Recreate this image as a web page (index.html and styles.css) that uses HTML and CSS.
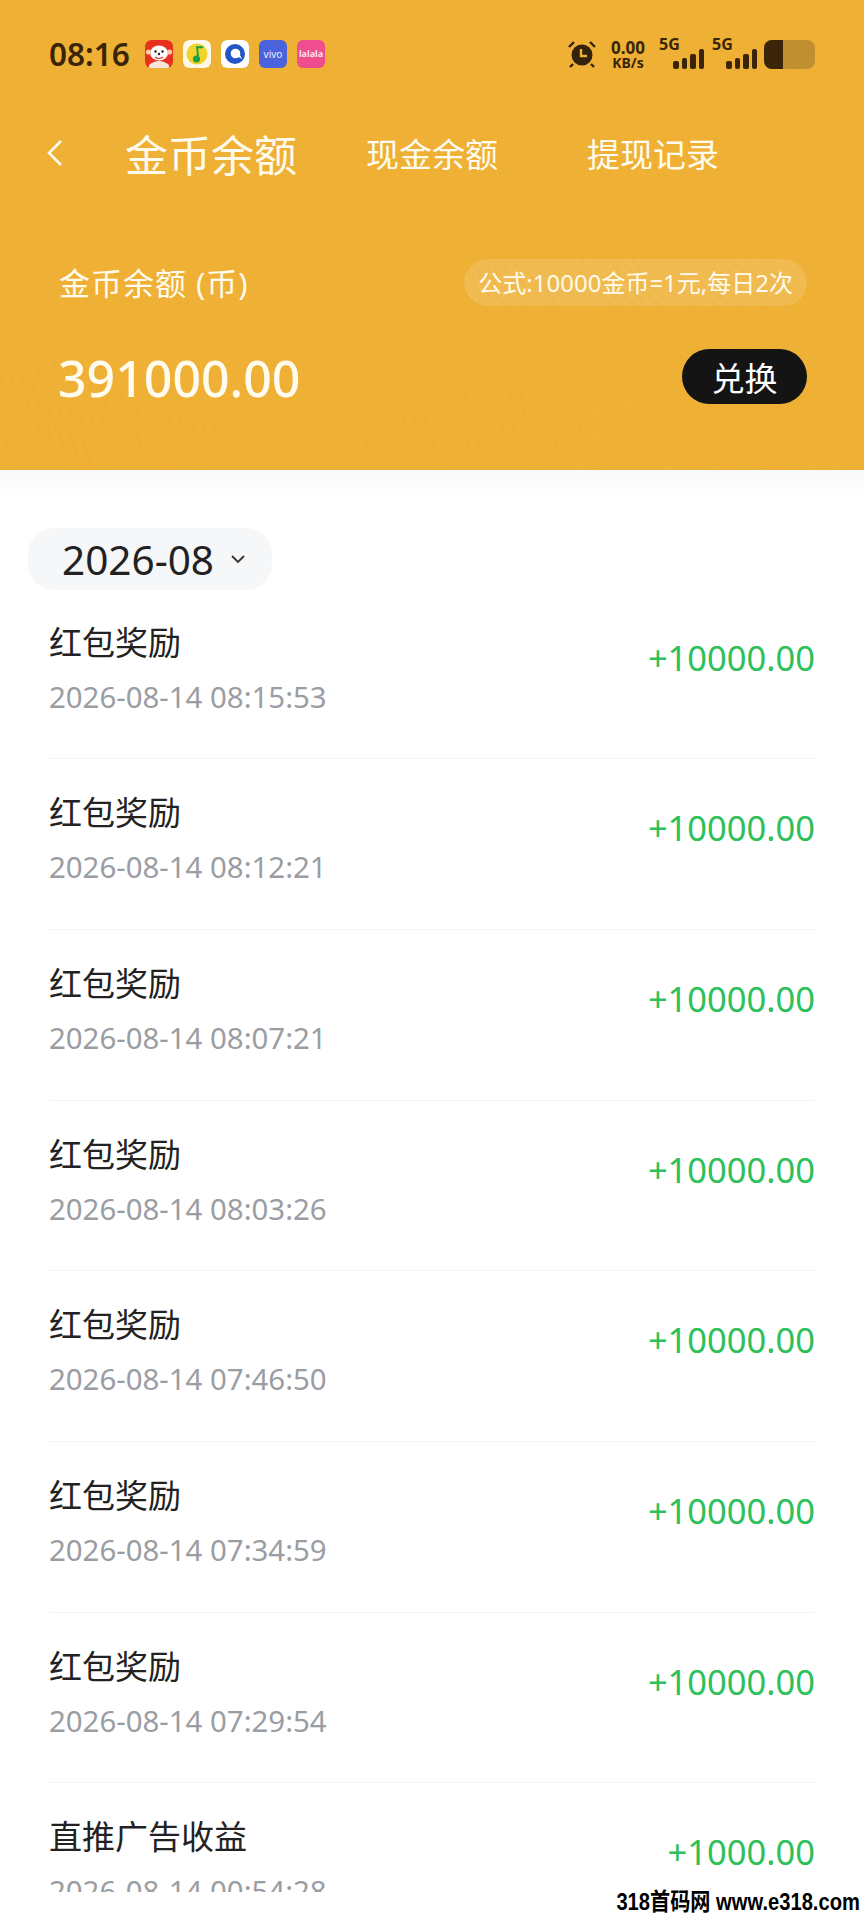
FILE: index.html
```html
<!DOCTYPE html>
<html lang="zh-CN">
<head>
    <meta charset="UTF-8">
    <meta name="viewport" content="width=device-width, initial-scale=1.0">
    <title>金币余额</title>
    <link rel="stylesheet" href="styles.css">
</head>
<body>
    <header class="header">
        <div class="status-bar">
            <span class="clock">08:16</span>
            <div class="app-icons">
                <svg class="app-icon" viewBox="0 0 28 28">
                    <rect width="28" height="28" rx="6" fill="#e8301f"/>
                    <path d="M4 25 Q14 17 24 25 L24 28 L4 28 Z" fill="#f6e6dc"/>
                    <ellipse cx="14" cy="13" rx="9" ry="7.5" fill="#fff"/>
                    <circle cx="3.5" cy="12" r="2.6" fill="#f7c9b0"/>
                    <circle cx="24.5" cy="12" r="2.6" fill="#f7c9b0"/>
                    <circle cx="10.5" cy="11.5" r="1.2" fill="#222"/>
                    <circle cx="17.5" cy="11.5" r="1.2" fill="#222"/>
                    <circle cx="14" cy="14" r="1.2" fill="#222"/>
                    <path d="M10 17 Q14 20 18 17" fill="none" stroke="#d33" stroke-width="1.2"/>
                </svg>
                <svg class="app-icon" viewBox="0 0 28 28">
                    <rect width="28" height="28" rx="6" fill="#fdf8e8"/>
                    <circle cx="14" cy="14" r="10.5" fill="#f3d32a"/>
                    <path d="M14 6 L15 16" stroke="#1f9e4a" stroke-width="2" fill="none"/>
                    <path d="M14 7 Q18 5 21 7 Q17 10 14 7 Z" fill="#1f9e4a"/>
                    <circle cx="13.5" cy="19" r="3.6" fill="#1f9e4a"/>
                </svg>
                <svg class="app-icon" viewBox="0 0 28 28">
                    <rect width="28" height="28" rx="6" fill="#fff"/>
                    <circle cx="14" cy="14" r="10" fill="#2456c9"/>
                    <circle cx="14.5" cy="13.5" r="4.8" fill="#fff"/>
                    <path d="M16 16 L21 19 L18 13 Z" fill="#fff"/>
                </svg>
                <span class="app-icon app-vivo">vivo</span>
                <span class="app-icon app-pink">lalala</span>
            </div>
            <div class="status-right">
                <svg class="alarm" viewBox="0 0 30 30">
                    <circle cx="15" cy="16" r="10.5" fill="#33220c"/>
                    <path d="M2 8 L7 3 M28 8 L23 3 M6 25 L3 28 M24 25 L27 28" stroke="#33220c" stroke-width="2.4" fill="none"/>
                    <path d="M14 10 V17 H20" stroke="#efb034" stroke-width="2.4" fill="none"/>
                </svg>
                <div class="net-speed">
                    <span class="net-num">0.00</span>
                    <span class="net-unit">KB/s</span>
                </div>
                <div class="signal">
                    <span class="signal-label">5G</span>
                    <div class="bars">
                        <i class="bar bar-1"></i><i class="bar bar-2"></i><i class="bar bar-3"></i><i class="bar bar-4"></i>
                    </div>
                </div>
                <div class="signal">
                    <span class="signal-label">5G</span>
                    <div class="bars">
                        <i class="bar bar-1"></i><i class="bar bar-2"></i><i class="bar bar-3"></i><i class="bar bar-4"></i>
                    </div>
                </div>
                <div class="battery"><div class="battery-level"></div></div>
            </div>
        </div>

        <nav class="nav">
            <svg class="back" viewBox="0 0 18 30">
                <path d="M15 3 L3 15 L15 27" fill="none" stroke="#fffbee" stroke-width="2.6"/>
            </svg>
            <span class="tab tab-active">金币余额</span>
            <span class="tab">现金余额</span>
            <span class="tab">提现记录</span>
        </nav>

        <div class="balance-top">
            <span class="balance-label">金币余额 (币)</span>
            <span class="formula">公式:10000金币=1元,每日2次</span>
        </div>
        <div class="balance-bottom">
            <span class="balance-num">391000.00</span>
            <button type="button" class="exchange">兑换</button>
        </div>
    </header>

    <main class="content">
        <div class="month">
            <span>2026-08</span>
            <svg class="month-arrow" viewBox="0 0 16 10">
                <path d="M2 2 L8 8 L14 2" fill="none" stroke="#333" stroke-width="1.8"/>
            </svg>
        </div>

        <div class="list">
            <div class="row">
                <div><div class="row-title">红包奖励</div><div class="row-date">2026-08-14 08:15:53</div></div>
                <div class="row-amount">+10000.00</div>
            </div>
            <div class="row">
                <div><div class="row-title">红包奖励</div><div class="row-date">2026-08-14 08:12:21</div></div>
                <div class="row-amount">+10000.00</div>
            </div>
            <div class="row">
                <div><div class="row-title">红包奖励</div><div class="row-date">2026-08-14 08:07:21</div></div>
                <div class="row-amount">+10000.00</div>
            </div>
            <div class="row">
                <div><div class="row-title">红包奖励</div><div class="row-date">2026-08-14 08:03:26</div></div>
                <div class="row-amount">+10000.00</div>
            </div>
            <div class="row">
                <div><div class="row-title">红包奖励</div><div class="row-date">2026-08-14 07:46:50</div></div>
                <div class="row-amount">+10000.00</div>
            </div>
            <div class="row">
                <div><div class="row-title">红包奖励</div><div class="row-date">2026-08-14 07:34:59</div></div>
                <div class="row-amount">+10000.00</div>
            </div>
            <div class="row">
                <div><div class="row-title">红包奖励</div><div class="row-date">2026-08-14 07:29:54</div></div>
                <div class="row-amount">+10000.00</div>
            </div>
            <div class="row">
                <div><div class="row-title">直推广告收益</div><div class="row-date">2026-08-14 00:54:28</div></div>
                <div class="row-amount">+1000.00</div>
            </div>
        </div>

        <div class="watermark">318首码网 www.e318.com</div>
    </main>
</body>
</html>
```

FILE: styles.css
```css
* {
    box-sizing: border-box;
}

html, body {
    margin: 0;
    padding: 0;
}

body {
    width: 864px;
    height: 1920px;
    overflow: hidden;
    background-color: #fff;
    font-family: 'Noto Sans', 'Noto Sans CJK SC', sans-serif;
}

/* orange top part with the wood grain lines */
.header {
    height: 470px;
    padding: 35px 57px 0 49px;
    color: #fffbee;
    background-color: #efb034;
    background-image:
        repeating-radial-gradient(circle at 95% 30%, rgba(255, 255, 255, 0.025) 0 3px, transparent 3px 9px),
        repeating-radial-gradient(ellipse at 30% 90%, rgba(200, 120, 0, 0.02) 0 3px, transparent 3px 11px);
}

.status-bar {
    display: flex;
    align-items: center;
    height: 38px;
}

.clock {
    width: 96px;
    margin-top: -2px;
    color: #3a2508;
    font-size: 31.5px;
    font-weight: 600;
    white-space: nowrap;
}

.app-icons {
    display: flex;
    gap: 10px;
}

.app-icon {
    display: block;
    width: 28px;
    height: 28px;
    border-radius: 6px;
    overflow: hidden;
    text-align: center;
    line-height: 28px;
}

.app-vivo {
    background-color: #4a63dc;
    color: #e8ecff;
    font-size: 10px;
}

.app-pink {
    background-color: #f04d8f;
    color: #ffe3ee;
    font-size: 9px;
    font-weight: 700;
}

.status-right {
    display: flex;
    align-items: center;
    margin-left: auto;
    margin-right: -8px;
    color: #3a2508;
}

.alarm {
    width: 30px;
    height: 30px;
    margin-right: 12px;
}

.net-speed {
    display: flex;
    flex-direction: column;
    align-items: center;
    width: 38px;
    margin-right: 11px;
    line-height: 1;
}

.net-num {
    font-size: 17px;
    font-weight: 700;
}

.net-unit {
    font-size: 14px;
    font-weight: 700;
}

.signal {
    position: relative;
    width: 46px;
    height: 30px;
    margin-right: 7px;
}

.signal-label {
    position: absolute;
    left: 1px;
    top: -3px;
    font-size: 16px;
    font-weight: 700;
    line-height: 16px;
}

.bars {
    position: absolute;
    right: 0;
    bottom: 0;
    display: flex;
    align-items: flex-end;
    gap: 3px;
}

.bar {
    display: block;
    width: 5.5px;
    border-radius: 2px;
    background-color: #3a2508;
}

.bar-1 { height: 8px; }
.bar-2 { height: 11px; }
.bar-3 { height: 15px; }
.bar-4 { height: 20px; }

.battery {
    width: 51px;
    height: 29px;
    border-radius: 8px;
    background-color: #c09030;
    overflow: hidden;
}

.battery-level {
    width: 19px;
    height: 100%;
    background-color: #3a2508;
}

.nav {
    display: flex;
    align-items: center;
    height: 60px;
    margin-top: 50px;
    margin-left: -3px;
}

.back {
    width: 18px;
    height: 30px;
    margin-right: 61px;
}

.tab {
    font-size: 33px;
    margin-left: 69px;
    white-space: nowrap;
}

.tab + .tab + .tab {
    margin-left: 89px;
}

.tab-active {
    margin-left: 0;
    font-size: 43px;
}

.balance-top {
    display: flex;
    justify-content: space-between;
    align-items: center;
    margin-top: 73px;
    margin-left: 10px;
}

.balance-label {
    font-size: 31px;
    letter-spacing: 1px;
}

.formula {
    height: 47px;
    margin-top: 3px;
    padding: 0 14px;
    border-radius: 24px;
    background-color: rgba(255, 255, 255, 0.13);
    font-size: 24px;
    line-height: 47px;
}

.balance-bottom {
    display: flex;
    justify-content: space-between;
    align-items: center;
    margin-top: 41px;
    margin-left: 9px;
}

.balance-num {
    margin-top: 3px;
    font-size: 50px;
    font-weight: 500;
    line-height: 56px;
}

.exchange {
    width: 125px;
    height: 55px;
    border: none;
    border-radius: 28px;
    padding: 0;
    background-color: #141414;
    color: #fff;
    font-family: inherit;
    font-size: 33px;
}

.content {
    position: relative;
    height: 1450px;
    padding-top: 58px;
    background-image: linear-gradient(#f8f9fa, #fff 30px);
}

.month {
    display: flex;
    align-items: center;
    width: 244px;
    height: 62px;
    margin-left: 28px;
    margin-bottom: -1.5px;
    padding-left: 34px;
    border-radius: 26px;
    background-color: #f6f7f8;
    color: #222;
    font-size: 40.5px;
}

.month-arrow {
    width: 16px;
    height: 10px;
    margin-left: 16px;
}

.list {
    height: 1303.5px;
    margin: 0 49px;
    overflow: hidden;
}

.row {
    display: flex;
    justify-content: space-between;
    align-items: flex-start;
    height: 170.7px;
    padding-top: 30px;
    border-bottom: 1px solid #f4f4f4;
}

.row-title {
    color: #222;
    font-size: 33px;
    line-height: 48px;
}

.row-date {
    margin-top: 10px;
    color: #9a9da3;
    font-size: 29.4px;
    line-height: 40px;
}

.row-amount {
    margin-top: 15px;
    color: #2ec05a;
    font-size: 34.5px;
    line-height: 48px;
}

.watermark {
    position: absolute;
    right: 4px;
    bottom: 6px;
    color: #000;
    font-family: 'Liberation Sans', 'Noto Sans CJK SC', sans-serif;
    font-size: 24px;
    font-weight: 700;
    line-height: 24px;
    white-space: nowrap;
    transform: scaleX(0.84);
    transform-origin: right center;
}
```
